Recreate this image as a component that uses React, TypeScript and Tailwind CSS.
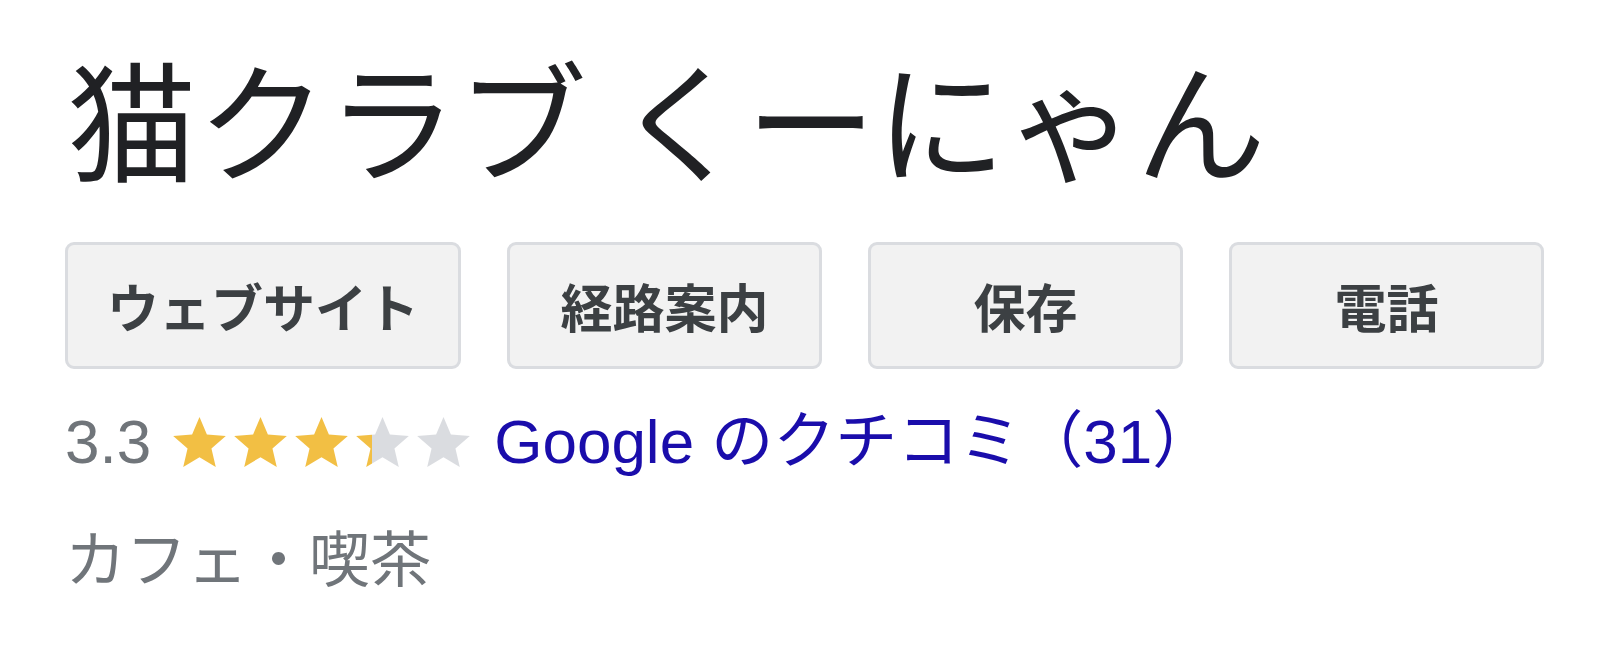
const STAR = "M12 17.27L18.18 21l-1.64-7.03L22 9.24l-7.19-.61L12 2 9.19 8.63 2 9.24l5.46 4.73L5.82 21z";

function Star({ fill }: { fill: number }) {
  const id = `half-${fill}`;
  return (
    <svg viewBox="2 2 20 19" className="w-[53px] h-[50px]">
      <defs>
        <linearGradient id={id} x1="0" x2="1" y1="0" y2="0">
          <stop offset={fill} stopColor="#f2bf44" />
          <stop offset={fill} stopColor="#dadce0" />
        </linearGradient>
      </defs>
      <path d={STAR} fill={`url(#${id})`} />
    </svg>
  );
}

const buttons = [
  { label: "ウェブサイト", w: "w-[396px]" },
  { label: "経路案内", w: "w-[315px]" },
  { label: "保存", w: "w-[315px]" },
  { label: "電話", w: "w-[315px]" },
];

export default function App() {
  const rating = 3.3;
  const stars = [0, 1, 2, 3, 4].map((i) => Math.max(0, Math.min(1, rating - i)));

  return (
    <div className="w-[1608px] h-[658px] bg-white pl-[65px] pt-[33px] font-['Noto_Sans_CJK_JP',sans-serif]">
      <h1 className="text-[130px] leading-[164px] text-[#202124] font-normal pl-[2px]">
        猫クラブ くーにゃん
      </h1>

      <div className="flex gap-[46px] mt-[45px]">
        {buttons.map((b) => (
          <button
            key={b.label}
            className={`${b.w} h-[127px] rounded-[9px] border-[3px] border-[#dadce0] bg-[#f2f2f2] text-[#3c4043] text-[52px] font-bold flex items-center justify-center`}
          >
            {b.label}
          </button>
        ))}
      </div>

      <div className="flex items-center mt-[42px] h-[62px] font-['Liberation_Sans','Noto_Sans_CJK_JP',sans-serif] text-[62px] leading-none">
        <span className="text-[#70757a]">3.3</span>
        <div className="flex gap-[8px] ml-[22px]">
          {stars.map((f, i) => (
            <Star key={i} fill={f} />
          ))}
        </div>
        <a className="text-[#1a0dab] ml-[24px]" href="#">
          Google のクチコミ（31）
        </a>
      </div>

      <div className="mt-[52px] text-[61px] leading-none text-[#70757a]">カフェ・喫茶</div>
    </div>
  );
}
